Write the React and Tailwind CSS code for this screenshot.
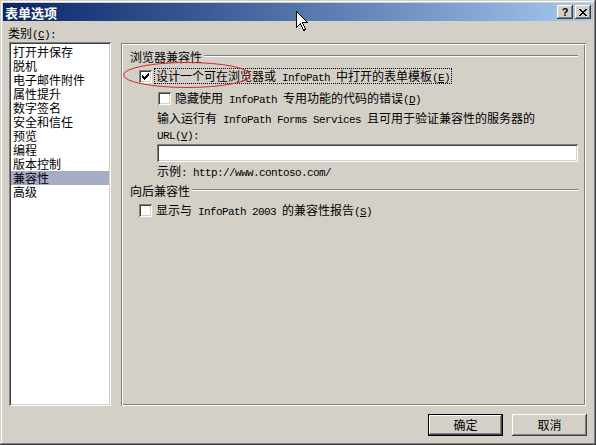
import React from "react";

const M = ({ children, className = "" }) => (
  <span className={"font-['Liberation_Mono',monospace] text-[11px] tracking-[-0.6px] " + className}>{children}</span>
);

const Acc = ({ k }) => (
  <M>
    (<span className="underline underline-offset-[1px]">{k}</span>)
  </M>
);

const Check = ({ checked }) => (
  <div className="w-[13px] h-[13px] shrink-0 bg-white shadow-[inset_1px_1px_#808080,inset_-1px_-1px_#ffffff,inset_2px_2px_#404040,inset_-2px_-2px_#d4d0c8] flex items-center justify-center">
    {checked && (
      <svg width="7" height="7" viewBox="0 0 7 7" shapeRendering="crispEdges">
        <path d="M0 2h1v3h-1zM1 3h1v3h-1zM2 4h1v3h-1zM3 3h1v3h-1zM4 2h1v3h-1zM5 1h1v3h-1zM6 0h1v3h-1z" fill="#000" />
      </svg>
    )}
  </div>
);

const Group = ({ title, className = "" }) => (
  <div className={"flex items-start h-[12px] " + className}>
    <span className="leading-[12px] whitespace-nowrap">{title}</span>
    <div className="flex-1 ml-[2px] mt-[4px] h-[2px] border-t border-t-[#808080] border-b border-b-white" />
  </div>
);

export default function App() {
  const items = ["打开并保存", "脱机", "电子邮件附件", "属性提升", "数字签名", "安全和信任", "预览", "编程", "版本控制", "兼容性", "高级"];
  return (
    <div className="relative w-[596px] h-[445px] bg-[#d4d0c8] p-[3px] shadow-[inset_-1px_-1px_#404040,inset_1px_1px_#d4d0c8,inset_-2px_-2px_#808080,inset_2px_2px_#ffffff] font-['Noto_Sans_CJK_SC',sans-serif] text-[12px] text-black overflow-hidden">
      {/* title bar */}
      <div className="h-[18px] flex items-center bg-gradient-to-r from-[#0a246a] to-[#a6caf0] pl-[2px] pr-[2px]">
        <span className="text-white font-bold text-[13px] leading-[13px]">表单选项</span>
        <div className="flex-1" />
        <div className="w-[16px] h-[14px] bg-[#d4d0c8] shadow-[inset_-1px_-1px_#404040,inset_1px_1px_#ffffff,inset_-2px_-2px_#808080] flex items-center justify-center">
          <span className="font-['Liberation_Sans',sans-serif] font-bold text-[11px] leading-[11px] text-black">?</span>
        </div>
        <div className="ml-[2px] w-[16px] h-[14px] bg-[#d4d0c8] shadow-[inset_-1px_-1px_#404040,inset_1px_1px_#ffffff,inset_-2px_-2px_#808080] flex items-center justify-center">
          <svg width="8" height="7" viewBox="0 0 8 7" shapeRendering="crispEdges">
            <path d="M0 0h2v1h-2zM6 0h2v1h-2zM1 1h2v1h-2zM5 1h2v1h-2zM2 2h4v1h-4zM3 3h2v1h-2zM2 4h4v1h-4zM1 5h2v1h-2zM5 5h2v1h-2zM0 6h2v1h-2zM6 6h2v1h-2z" fill="#000" />
          </svg>
        </div>
      </div>

      {/* body */}
      <div className="flex pl-[6px] pr-[7px]">
        <div className="flex flex-col w-[102px]">
          <div className="mt-[6px] h-[12px] leading-[12px] pl-[-1px] -ml-[1px]">
            类别<Acc k="C" /><M>:</M>
          </div>
          <div className="mt-[3px] h-[364px] bg-white p-[2px] shadow-[inset_1px_1px_#808080,inset_-1px_-1px_#ffffff,inset_2px_2px_#404040,inset_-2px_-2px_#d4d0c8]">
            <div className="pt-[1px]">
              {items.map((t) => (
                <div key={t} className={"h-[14px] leading-[14px] pl-[2px] whitespace-nowrap " + (t === "兼容性" ? "bg-[#a6acc6]" : "")}>
                  {t}
                </div>
              ))}
            </div>
          </div>
        </div>

        <div className="ml-[10px] flex-1 mt-[22px] h-[363px] p-[2px] shadow-[inset_1px_1px_#808080,inset_-1px_-1px_#ffffff,inset_2px_2px_#ffffff,inset_-2px_-2px_#808080]">
          <div className="pl-[7px] pr-[6px] flex flex-col">
            <Group title="浏览器兼容性" className="mt-[6px]" />
            <div className="mt-[5px] h-[16px] flex items-center pl-[9px]">
              <Check checked />
              <span className="ml-[2px] border border-dotted border-black px-[1px] h-[16px] leading-[14px] whitespace-nowrap">
                设计一个可在浏览器或<M> InfoPath </M>中打开的表单模板<Acc k="E" />
              </span>
            </div>
            <div className="mt-[6px] h-[16px] flex items-center pl-[28px]">
              <Check />
              <span className="ml-[2px] border border-transparent px-[1px] h-[16px] leading-[14px] whitespace-nowrap">
                隐藏使用<M> InfoPath </M>专用功能的代码的错误<Acc k="D" />
              </span>
            </div>
            <div className="mt-[5px] ml-[27px] leading-[13px] whitespace-nowrap">
              <div>
                输入运行有<M> InfoPath Forms Services </M>且可用于验证兼容性的服务器的
              </div>
              <div>
                <M>URL</M>
                <Acc k="V" />
                <M>:</M>
              </div>
            </div>
            <div className="mt-[1px] ml-[27px] h-[18px] bg-white shadow-[inset_1px_1px_#808080,inset_-1px_-1px_#ffffff,inset_2px_2px_#404040,inset_-2px_-2px_#d4d0c8]" />
            <div className="mt-[3px] ml-[27px] h-[12px] leading-[12px] whitespace-nowrap">
              示例<M>: http://www.contoso.com/</M>
            </div>
            <Group title="向后兼容性" className="mt-[8px]" />
            <div className="mt-[5px] h-[16px] flex items-center pl-[9px]">
              <Check />
              <span className="ml-[2px] border border-transparent px-[1px] h-[16px] leading-[14px] whitespace-nowrap">
                显示与<M> InfoPath 2003 </M>的兼容性报告<Acc k="S" />
              </span>
            </div>
          </div>
        </div>
      </div>

      {/* buttons */}
      <div className="flex justify-end pr-[6px] mt-[8px] gap-[9px]">
        <div className="w-[75px] h-[22px] border border-black bg-[#d4d0c8] shadow-[inset_-1px_-1px_#404040,inset_1px_1px_#ffffff,inset_-2px_-2px_#808080] flex items-center justify-center leading-[12px]">
          确定
        </div>
        <div className="w-[75px] h-[22px] bg-[#d4d0c8] shadow-[inset_-1px_-1px_#404040,inset_1px_1px_#ffffff,inset_-2px_-2px_#808080] flex items-center justify-center leading-[12px]">
          取消
        </div>
      </div>

      {/* red annotation ellipse */}
      <svg className="absolute left-[122px] top-[61px]" width="130" height="28" viewBox="0 0 130 28">
        <ellipse cx="65" cy="14" rx="63.5" ry="12.5" fill="none" stroke="#d42a2a" strokeWidth="1" />
      </svg>

      {/* mouse cursor */}
      <svg className="absolute left-[296px] top-[11px]" width="13" height="21" viewBox="0 0 13 21" shapeRendering="crispEdges">
        <path d="M0.5 0.5 L0.5 16.5 L4.5 12.5 L7.5 19.5 L9.5 18.5 L6.5 11.5 L11.5 11.5 Z" fill="#fff" stroke="#000" strokeWidth="1" />
      </svg>
    </div>
  );
}
